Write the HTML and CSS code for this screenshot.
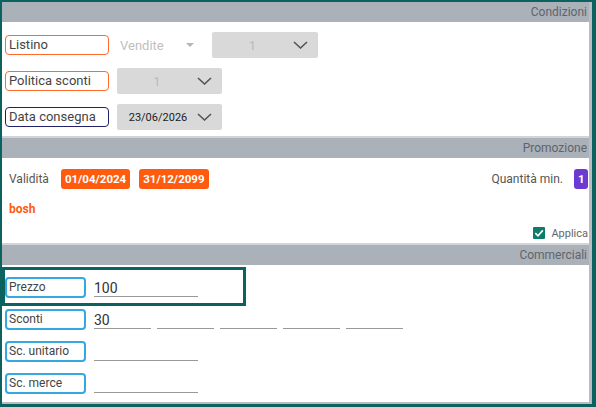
FILE: index.html
```html
<!DOCTYPE html>
<html lang="it">
<head>
    <meta charset="UTF-8">
    <meta name="viewport" content="width=device-width, initial-scale=1.0">
    <title>Riga ordine</title>
    <link rel="stylesheet" href="styles.css">
</head>
<body>

<div class="panel">

    <!-- Condizioni -->
    <div class="section-title">Condizioni</div>
    <div class="section-body conditions">
        <div class="cond-row">
            <div class="field-label orange">Listino</div>
            <div class="spinner">
                <span>Vendite</span>
                <span class="spinner-arrow"></span>
            </div>
            <div class="dropdown wide">
                <span class="dropdown-value disabled">1</span>
                <svg class="chevron" width="15" height="8" viewBox="0 0 15 8"><path d="M1 1 L7.5 7 L14 1" fill="none" stroke="#555" stroke-width="1.6"/></svg>
            </div>
        </div>
        <div class="cond-row">
            <div class="field-label orange">Politica sconti</div>
            <div class="dropdown">
                <span class="dropdown-value disabled">1</span>
                <svg class="chevron" width="15" height="8" viewBox="0 0 15 8"><path d="M1 1 L7.5 7 L14 1" fill="none" stroke="#555" stroke-width="1.6"/></svg>
            </div>
        </div>
        <div class="cond-row">
            <div class="field-label navy">Data consegna</div>
            <div class="dropdown">
                <span class="dropdown-value">23/06/2026</span>
                <svg class="chevron" width="15" height="8" viewBox="0 0 15 8"><path d="M1 1 L7.5 7 L14 1" fill="none" stroke="#555" stroke-width="1.6"/></svg>
            </div>
        </div>
    </div>

    <!-- Promozione -->
    <div class="section-title">Promozione</div>
    <div class="section-body promo">
        <div class="promo-row">
            <span class="promo-text">Validità</span>
            <span class="badge orange-bg">01/04/2024</span>
            <span class="badge orange-bg">31/12/2099</span>
            <span class="promo-text qty">Quantità min.</span>
            <span class="badge purple-bg">1</span>
        </div>
        <div class="promo-name">bosh</div>
        <div class="apply-row">
            <span class="checkbox">
                <svg width="12" height="12" viewBox="0 0 12 12"><path d="M2.3 6.2 L5 8.8 L9.8 3.4" fill="none" stroke="#fff" stroke-width="1.6"/></svg>
            </span>
            <span>Applica</span>
        </div>
    </div>

    <!-- Commerciali -->
    <div class="section-title">Commerciali</div>
    <div class="section-body commercial">
        <div class="com-row selected">
            <div class="field-label blue">Prezzo</div>
            <div class="line-input">100</div>
        </div>
        <div class="com-row">
            <div class="field-label blue">Sconti</div>
            <div class="line-input short">30</div>
            <div class="line-input short"></div>
            <div class="line-input short"></div>
            <div class="line-input short"></div>
            <div class="line-input short"></div>
        </div>
        <div class="com-row">
            <div class="field-label blue">Sc. unitario</div>
            <div class="line-input"></div>
        </div>
        <div class="com-row">
            <div class="field-label blue">Sc. merce</div>
            <div class="line-input"></div>
        </div>
    </div>

</div>

</body>
</html>
```

FILE: styles.css
```css
/* Base */
body {
    margin: 0;
    padding: 0;
    background-color: #0b625f;
    font-family: Roboto, "Liberation Sans", sans-serif;
}

.panel {
    margin: 2px 4px 3px 2px;
    width: 587px;
    background-color: #fff;
    border-right: 3px solid #b9bdc1;
    border-bottom: 2px solid #b9bdc1;
}

/* Section headers */
.section-title {
    height: 20px;
    line-height: 21px;
    background-color: #abb1b8;
    color: #5f646b;
    font-size: 12px;
    text-align: right;
    padding-right: 2px;
}

.section-body {
    border-bottom: 2px solid #d2d5d8;
}

.section-body.commercial {
    border-bottom: none;
}

/* Label boxes */
.field-label {
    box-sizing: border-box;
    width: 104px;
    height: 20px;
    line-height: 17px;
    padding-left: 3px;
    border: 1.5px solid #ff6a2c;
    border-radius: 4px;
    font-size: 13px;
    color: #444;
    white-space: nowrap;
}

.field-label.orange { border-color: #ff6a2c; }
.field-label.navy { border-color: #22226a; }

.field-label.blue {
    width: 81px;
    height: 21px;
    line-height: 17px;
    border: 2px solid #35a8de;
    padding-left: 2px;
    font-size: 12px;
}

/* Condizioni */
.conditions {
    display: flex;
    flex-direction: column;
    gap: 10px;
    padding: 10px 0 6px 3px;
}

.cond-row {
    display: flex;
    align-items: center;
    height: 26px;
    gap: 8px;
}

.spinner {
    width: 88px;
    display: flex;
    align-items: center;
    justify-content: space-between;
    padding-left: 3px;
    box-sizing: border-box;
    color: #c0c0c0;
    font-size: 13px;
    margin-right: -1px;
}

.spinner-arrow {
    width: 0;
    height: 0;
    border-left: 4px solid transparent;
    border-right: 4px solid transparent;
    border-top: 4px solid #b5b5b5;
    margin-right: 11px;
}

.dropdown {
    box-sizing: border-box;
    width: 105px;
    height: 26px;
    display: flex;
    align-items: center;
    background-color: #d9d9d9;
    border-radius: 2px;
    padding-right: 10px;
    font-size: 11px;
}

.dropdown.wide {
    width: 106px;
}

.dropdown-value {
    flex: 1;
    text-align: center;
    color: #222;
    padding-left: 2px;
}

.dropdown-value.disabled {
    color: #b9b9b9;
    font-size: 13px;
    padding-left: 0;
}

/* Promozione */
.promo {
    padding: 11px 1px 3px 7px;
}

.promo-row {
    display: flex;
    align-items: center;
    height: 20px;
}

.promo-text {
    font-size: 12px;
    color: #555;
    margin-right: 12px;
}

.promo-text.qty {
    margin-left: auto;
    margin-right: 11px;
}

.badge {
    height: 20px;
    line-height: 20px;
    padding: 0 4px;
    border-radius: 3px;
    color: #fff;
    font-weight: bold;
    font-size: 11.5px;
}

.orange-bg {
    background-color: #ff5b0e;
    margin-right: 9px;
}

.purple-bg {
    background-color: #6c3ad2;
    width: 6px;
    text-align: center;
}

.promo-name {
    margin-top: 12px;
    height: 16px;
    line-height: 16px;
    color: #ff5b0e;
    font-weight: bold;
    font-size: 12px;
}

.apply-row {
    margin-top: 9px;
    height: 14px;
    display: flex;
    justify-content: flex-end;
    align-items: center;
    gap: 6px;
    font-size: 11px;
    color: #666;
}

.checkbox {
    width: 12px;
    height: 12px;
    background-color: #0f7b69;
    border-radius: 1px;
    display: flex;
}

/* Commerciali */
.commercial {
    display: flex;
    flex-direction: column;
    gap: 11px;
    padding: 12px 3px 8px 3px;
}

.com-row {
    display: flex;
    align-items: flex-end;
    height: 21px;
    gap: 8px;
    position: relative;
}

.com-row.selected::before {
    content: "";
    position: absolute;
    left: -3px;
    top: -10px;
    width: 244px;
    height: 39px;
    box-sizing: border-box;
    border: 3px solid #0b625f;
}

.line-input {
    box-sizing: border-box;
    width: 104px;
    height: 21px;
    border-bottom: 1px solid #999;
    font-size: 14px;
    color: #333;
    line-height: 24px;
    margin-bottom: 1px;
}

.line-input.short {
    width: 57px;
    margin-right: -2px;
}
```
